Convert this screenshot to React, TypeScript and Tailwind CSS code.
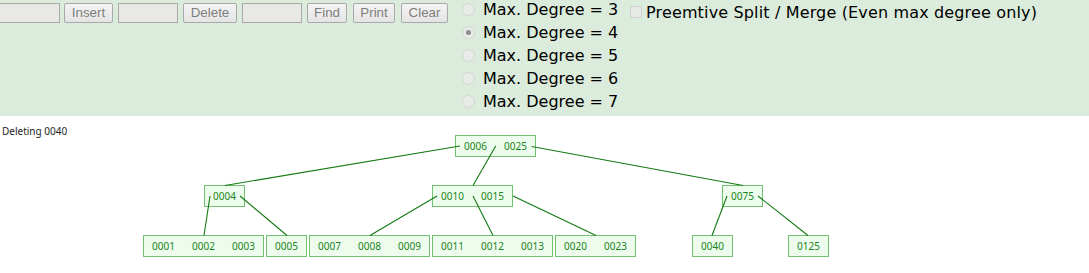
import React from "react";

type TNode = { x: number; y: number; keys: string[] };

const nodes: TNode[] = [
  { x: 455, y: 135, keys: ["0006", "0025"] },
  { x: 204, y: 185, keys: ["0004"] },
  { x: 432, y: 185, keys: ["0010", "0015"] },
  { x: 722, y: 185, keys: ["0075"] },
  { x: 143, y: 235, keys: ["0001", "0002", "0003"] },
  { x: 266, y: 235, keys: ["0005"] },
  { x: 309, y: 235, keys: ["0007", "0008", "0009"] },
  { x: 432, y: 235, keys: ["0011", "0012", "0013"] },
  { x: 555, y: 235, keys: ["0020", "0023"] },
  { x: 692, y: 235, keys: ["0040"] },
  { x: 788, y: 235, keys: ["0125"] },
];

const edges: [number, number, number, number][] = [
  [460, 146, 225, 185.5],
  [495.7, 146, 473, 185.5],
  [531.7, 146.5, 743, 185.5],
  [210, 196, 204, 235.5],
  [240, 196, 287, 235.5],
  [437, 196, 370, 235.5],
  [473, 196, 493, 235.5],
  [513, 196, 596, 235.5],
  [727, 196, 712, 235.5],
  [758, 196, 808, 235.5],
];

const font = { fontFamily: '"Noto Sans", "Open Sans", sans-serif' };

function Btn({ label, w }: { label: string; w: string }) {
  return (
    <button
      className={`${w} h-5 block border border-[#a9a9a9] bg-gradient-to-b from-[#f4f4f4] to-[#e4e4e4] text-[13.33px] leading-none text-[#7d7d7d] font-['Liberation_Sans',Arial,sans-serif] rounded-[2px]`}
    >
      {label}
    </button>
  );
}

function Field({ w }: { w: string }) {
  return <div className={`${w} h-5 border border-[#a9a9a9] bg-[#e8e9e4]`} />;
}

function Radio({ checked }: { checked?: boolean }) {
  return (
    <span className="w-[13px] h-[13px] rounded-full border border-[#d2d6d2] bg-[#e8ebe8] flex items-center justify-center">
      {checked && <span className="w-[5px] h-[5px] rounded-full bg-[#8c8c8c]" />}
    </span>
  );
}

export default function App() {
  return (
    <div className="w-[1089px] h-[273px] bg-white overflow-hidden">
      <div className="h-[116px] bg-[#dcecdc] flex items-start">
        <div className="flex items-start mt-[3px]">
          <div className="w-[60px] h-5 border border-[#a9a9a9] border-l-0 bg-[#e8e9e4]" />
          <div className="ml-[4px] flex"><Btn label="Insert" w="w-[49px]" /></div>
          <div className="ml-[5px] flex"><Field w="w-[60px]" /></div>
          <div className="ml-[5px] flex"><Btn label="Delete" w="w-[54px]" /></div>
          <div className="ml-[5px] flex"><Field w="w-[60px]" /></div>
          <div className="ml-[5px] flex"><Btn label="Find" w="w-[40px]" /></div>
          <div className="ml-[6px] flex"><Btn label="Print" w="w-[42px]" /></div>
          <div className="ml-[6px] flex"><Btn label="Clear" w="w-[47px]" /></div>
        </div>
        <div className="ml-[14px] mt-[-2px] w-[168px] flex flex-col font-['DejaVu_Sans',Verdana,sans-serif] text-[16px] leading-[23px] text-black">
          {[3, 4, 5, 6, 7].map((d) => (
            <div key={d} className="h-[23px] flex items-center whitespace-nowrap">
              <Radio checked={d === 4} />
              <span className="ml-[8px]">Max. Degree = {d}</span>
            </div>
          ))}
        </div>
        <div className="mt-[1px] h-[23px] flex items-center font-['DejaVu_Sans',Verdana,sans-serif] text-[16px] leading-[23px] text-black whitespace-nowrap">
          <span className="w-[12px] h-[12px] mt-[-2px] border border-[#cfd3cf] bg-[#e6e9e6] rounded-[2px]" />
          <span className="ml-[4px] tracking-[0.15px]">Preemtive Split / Merge (Even max degree only)</span>
        </div>
      </div>
      <svg width={1089} height={157} className="block">
        <g transform="translate(0,-116)">
          <text x={2} y={135} fontSize={10} fill="#1e1e1e" style={font}>
            Deleting 0040
          </text>
          {nodes.map((n, i) => (
            <g key={i}>
              <rect
                x={n.x + 0.5}
                y={n.y + 0.5}
                width={n.keys.length * 40}
                height={21}
                fill="#eefcee"
                stroke="#72c172"
                strokeWidth={1}
              />
              {n.keys.map((k, j) => (
                <text
                  key={k}
                  x={n.x + 20.5 + 40 * j}
                  y={n.y + 14.5}
                  fontSize={10}
                  textAnchor="middle"
                  fill="#1a861a"
                  style={font}
                >
                  {k}
                </text>
              ))}
            </g>
          ))}
          {edges.map(([x1, y1, x2, y2], i) => (
            <line key={i} x1={x1} y1={y1} x2={x2} y2={y2} stroke="#137a13" strokeWidth={1.1} />
          ))}
        </g>
      </svg>
    </div>
  );
}
